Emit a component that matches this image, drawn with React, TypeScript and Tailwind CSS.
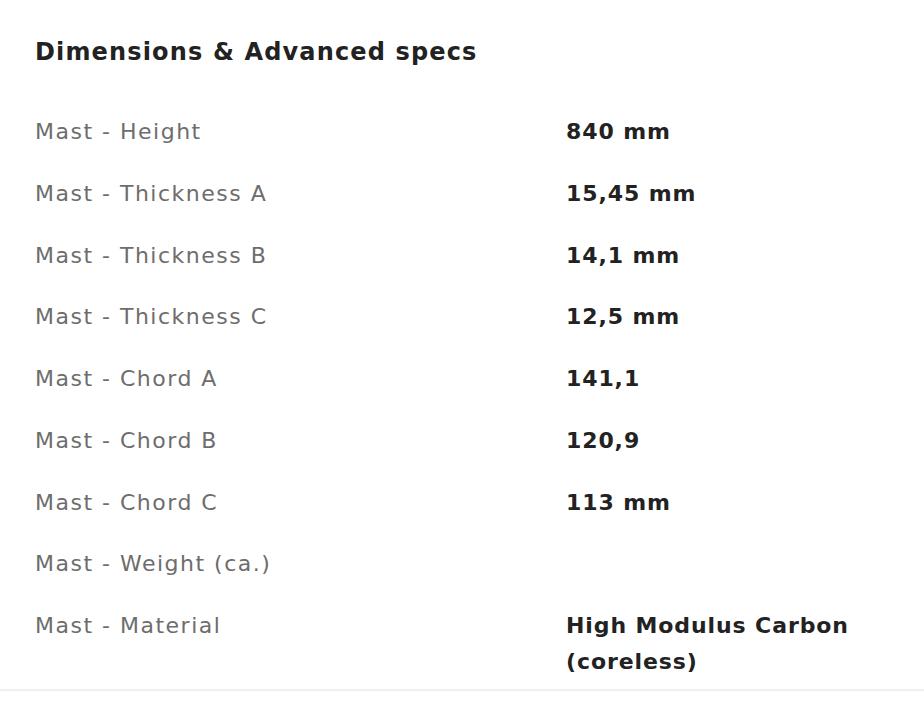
const specs: { label: string; value: string }[] = [
  { label: "Mast - Height", value: "840 mm" },
  { label: "Mast - Thickness A", value: "15,45 mm" },
  { label: "Mast - Thickness B", value: "14,1 mm" },
  { label: "Mast - Thickness C", value: "12,5 mm" },
  { label: "Mast - Chord A", value: "141,1" },
  { label: "Mast - Chord B", value: "120,9" },
  { label: "Mast - Chord C", value: "113 mm" },
  { label: "Mast - Weight (ca.)", value: "" },
  { label: "Mast - Material", value: "High Modulus Carbon (coreless)" },
];

export default function App() {
  return (
    <div className="min-h-[702px] w-[924px] bg-white font-['DejaVu_Sans',sans-serif]">
      <section className="pt-9 border-b-2 border-[#f0f0f0]">
        <h2 className="px-[35px] text-[24px] leading-8 font-bold tracking-[1.15px] text-[#222222]">
          Dimensions &amp; Advanced specs
        </h2>
        <dl className="mt-[33px]">
          {specs.map((s, i) => (
            <div
              key={s.label}
              className={
                i === specs.length - 1
                  ? "grid grid-cols-[531px_1fr] pl-[35px] pr-[60px] pt-[13px] pb-[9px]"
                  : "grid grid-cols-[531px_1fr] pl-[35px] pr-[60px] py-[13px]"
              }
            >
              <dt className="text-[22px] leading-[35.75px] tracking-[1.5px] text-[#6d6d6d]">{s.label}</dt>
              <dd className="text-[22px] leading-[35.75px] font-bold tracking-[0.9px] text-[#222222]">{s.value}</dd>
            </div>
          ))}
        </dl>
      </section>
    </div>
  );
}
